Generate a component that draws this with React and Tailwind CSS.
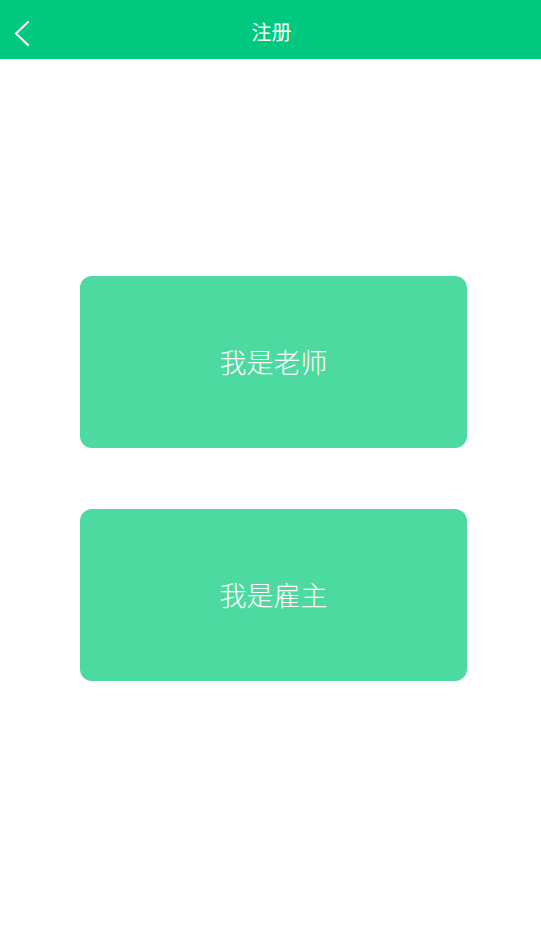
const cards = ['我是老师', '我是雇主']

export default function App() {
  return (
    <div
      className="min-h-screen w-full bg-white"
      style={{ fontFamily: '"Noto Sans CJK SC", "Noto Sans", sans-serif' }}
    >
      <header className="relative flex h-[59px] items-center justify-center bg-[#00c97f]">
        <button className="absolute left-[14px] top-[21px] text-white">
          <svg width="16" height="25" viewBox="0 0 16 25" fill="none">
            <polyline
              points="14,1 2,12.5 14,24"
              stroke="currentColor"
              strokeWidth="2"
              strokeLinecap="round"
              strokeLinejoin="round"
            />
          </svg>
        </button>
        <h1 className="pl-[2px] pt-[4px] text-[20px] text-white">注册</h1>
      </header>

      <div className="flex flex-col gap-[61px] pl-[80px] pt-[217px]">
        {cards.map((label) => (
          <div
            key={label}
            className="flex h-[172px] w-[387px] items-center justify-center rounded-[12px] bg-[#4ddaa0] text-[27px] font-light text-white"
          >
            {label}
          </div>
        ))}
      </div>
    </div>
  )
}
